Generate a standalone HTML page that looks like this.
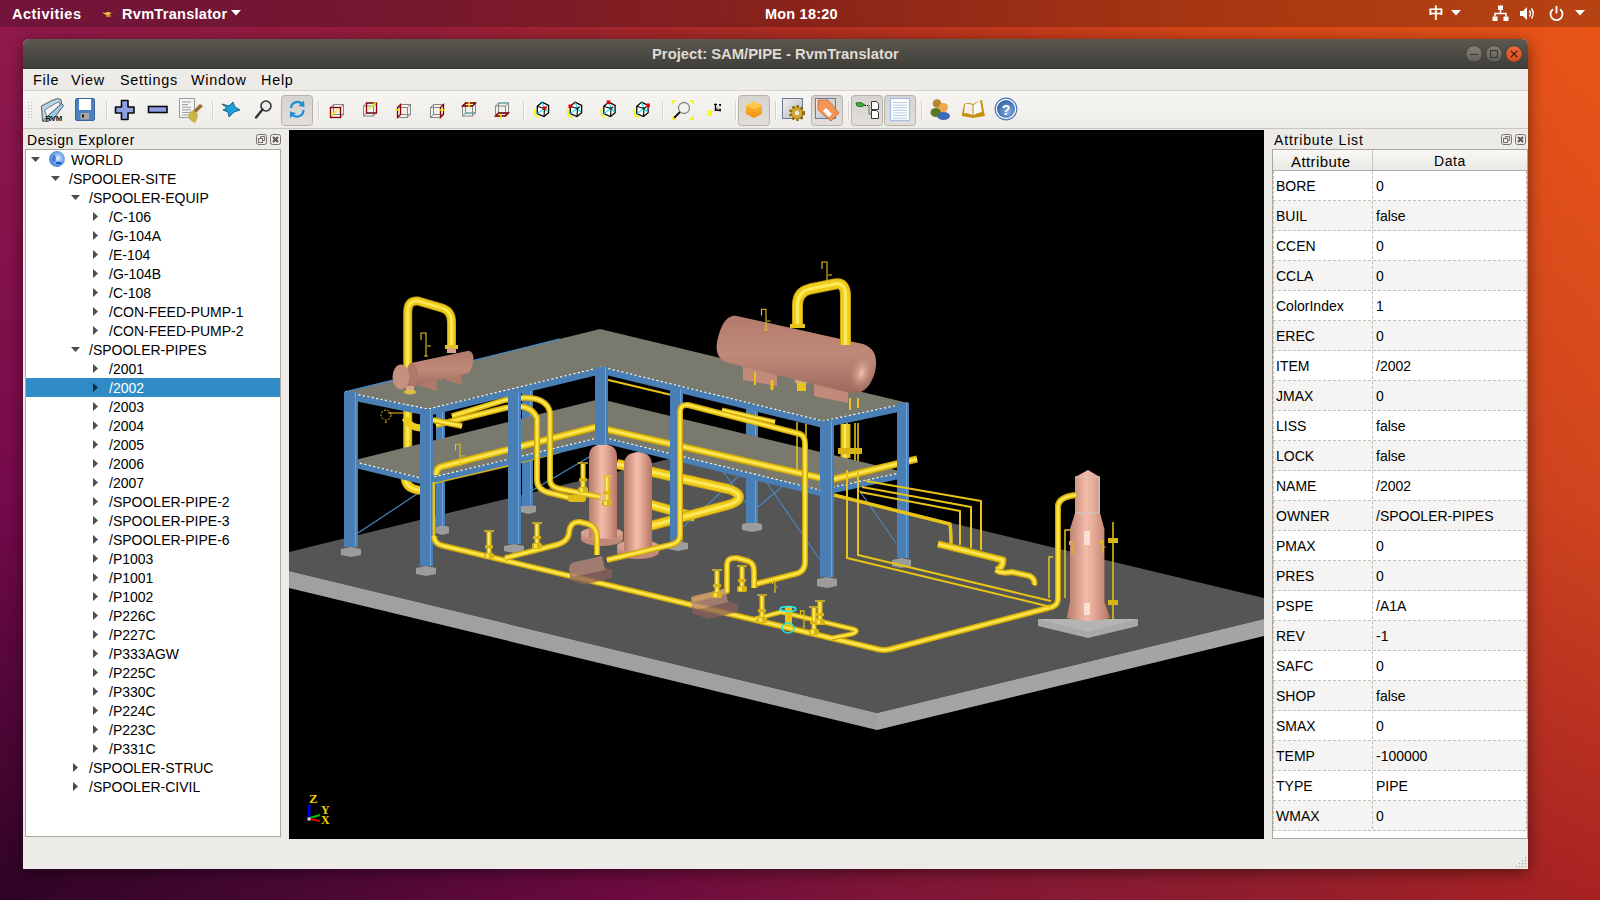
<!DOCTYPE html>
<html><head><meta charset="utf-8">
<style>
*{box-sizing:border-box;margin:0;padding:0}
html,body{width:1600px;height:900px;overflow:hidden}
body{position:relative;font-family:"Liberation Sans",sans-serif;font-size:14px;line-height:19px;color:#000;background:#8a1f40}
#wp{position:absolute;left:0;top:0;width:1600px;height:900px}
#topbar{position:absolute;left:0;top:0;width:1600px;height:27px;background:rgba(0,0,0,0.22);color:#fff;font-weight:bold;font-size:14.5px}
#topbar span{position:absolute;top:5px;white-space:nowrap}
#win{position:absolute;left:23px;top:39px;width:1505px;height:830px;background:#edebe7;border-radius:6px 6px 0 0;
 box-shadow:0 3px 16px rgba(0,0,0,0.5);overflow:hidden}
#title{position:absolute;left:0;top:0;width:1505px;height:30px;background:linear-gradient(#5b5850,#3f3e39);border-bottom:1px solid #34332f}
#title .t{position:absolute;left:629px;top:6px;color:#dfdbd2;font-weight:bold;font-size:14.8px;white-space:nowrap}
#menubar{position:absolute;left:0;top:30px;width:1505px;height:22px;background:#edebe7;border-bottom:1px solid #d6d2cd;border-top:1px solid #f8f7f4}
#menubar span{position:absolute;top:1px;font-size:14.4px;letter-spacing:0.75px}
#toolbar{position:absolute;left:0;top:52px;width:1505px;height:38px;background:linear-gradient(#f6f5f2,#eeece8);border-bottom:1px solid #c9c5bf}
.dtitle{position:absolute;font-size:14px;white-space:nowrap}
#tree{position:absolute;left:2px;top:110px;width:256px;height:688px;background:#fff;border:1px solid #aaa6a0;overflow:hidden}
.row{position:absolute;left:0;height:19px;width:254px;white-space:nowrap}
.row span{position:absolute;top:1px;font-size:14px;line-height:19px}
.row.sel{background:#308cc6;color:#fff}
.arr{position:absolute}
#view{position:absolute;left:266px;top:91px;width:975px;height:709px;background:#000;overflow:hidden}
#attr{position:absolute;left:1249px;top:110px;width:256px;height:690px;background:#fff;border:1px solid #aaa6a0;overflow:hidden}
#attr .hdr{position:absolute;left:0;top:0;width:254px;height:21px;background:linear-gradient(#f9f8f6,#ebe9e5);border-bottom:1px solid #b0aca6}
#attr .hdr span{position:absolute;top:2px;font-size:14px;white-space:nowrap}
.arow{position:absolute;left:0;width:254px;height:30px}
.arow .k,.arow .v{position:absolute;top:6px;font-size:14px;white-space:nowrap}
.arow .k{left:3px}.arow .v{left:103px}

</style></head><body>
<svg id="wp" width="1600" height="900" viewBox="0 0 1600 900">
 <defs>
  <linearGradient id="wpt" x1="0" y1="0" x2="1" y2="0">
   <stop offset="0" stop-color="#921a4c"/>
   <stop offset="0.25" stop-color="#961e3c"/>
   <stop offset="0.5" stop-color="#b02e22"/>
   <stop offset="0.75" stop-color="#d64618"/>
   <stop offset="1" stop-color="#ea5618"/>
  </linearGradient>
  <linearGradient id="wpmid" x1="0" y1="0" x2="1" y2="0">
   <stop offset="0" stop-color="#760a4c"/>
   <stop offset="0.25" stop-color="#7c0e44"/>
   <stop offset="0.5" stop-color="#982030"/>
   <stop offset="0.75" stop-color="#b83222"/>
   <stop offset="1" stop-color="#d0461e"/>
  </linearGradient>
  <linearGradient id="wpb" x1="0" y1="0" x2="1" y2="0">
   <stop offset="0" stop-color="#2e0424"/>
   <stop offset="0.19" stop-color="#480834"/>
   <stop offset="0.38" stop-color="#6a0a40"/>
   <stop offset="0.56" stop-color="#7e1638"/>
   <stop offset="0.75" stop-color="#8c1c30"/>
   <stop offset="1" stop-color="#a82222"/>
  </linearGradient>
  <linearGradient id="wpm1" x1="0" y1="0" x2="0" y2="1">
   <stop offset="0.03" stop-color="#fff" stop-opacity="0"/>
   <stop offset="0.555" stop-color="#fff" stop-opacity="1"/>
  </linearGradient>
  <linearGradient id="wpm2" x1="0" y1="0" x2="0" y2="1">
   <stop offset="0.555" stop-color="#fff" stop-opacity="0"/>
   <stop offset="1" stop-color="#fff" stop-opacity="1"/>
  </linearGradient>
  <mask id="wpmask1"><rect width="1600" height="900" fill="url(#wpm1)"/></mask>
  <mask id="wpmask2"><rect width="1600" height="900" fill="url(#wpm2)"/></mask>
 </defs>
 <rect width="1600" height="900" fill="url(#wpt)"/>
 <rect width="1600" height="900" fill="url(#wpmid)" mask="url(#wpmask1)"/>
 <rect width="1600" height="900" fill="url(#wpb)" mask="url(#wpmask2)"/>
</svg>
<div id="topbar">
 <span style="left:12px;letter-spacing:0.5px">Activities</span>
 <svg style="position:absolute;left:101px;top:8px" width="14" height="10"><path d="M1 4Q4 8 8 7L13 3L10 5Q7 3 4 5Z" fill="#f3c43a"/><path d="M5 8H10" stroke="#d9a52a" stroke-width="1.5"/></svg>
 <span style="left:122px;letter-spacing:0.3px">RvmTranslator</span>
 <svg style="position:absolute;left:231px;top:10px" width="10" height="6"><path d="M0 0H10L5 5.5Z" fill="#fff"/></svg>
 <span style="left:765px;letter-spacing:0.2px">Mon 18:20</span>
 <span style="left:1429px;top:3px;font-size:15px">中</span>
 <svg style="position:absolute;left:1451px;top:10px" width="10" height="6"><path d="M0 0H10L5 5.5Z" fill="#fff"/></svg>
 <svg style="position:absolute;left:1492px;top:5px" width="17" height="17"><rect x="6" y="0.5" width="5" height="4.5" fill="#fff"/><rect x="0.5" y="11.5" width="5" height="4.5" fill="#fff"/><rect x="11.5" y="11.5" width="5" height="4.5" fill="#fff"/><path d="M8.5 5V8.5M3 11.5V8.5H14V11.5" stroke="#fff" stroke-width="1.5" fill="none"/></svg>
 <svg style="position:absolute;left:1519px;top:5px" width="17" height="17"><path d="M1 6H4L8 2V15L4 11H1Z" fill="#fff"/><path d="M10.5 5.5Q12.5 8.5 10.5 11.5M12.5 3.5Q16 8.5 12.5 13.5" stroke="#fff" stroke-width="1.4" fill="none"/></svg>
 <svg style="position:absolute;left:1548px;top:5px" width="17" height="17"><path d="M5 4.2A6 6 0 1 0 12 4.2" stroke="#fff" stroke-width="1.8" fill="none"/><path d="M8.5 1V8.5" stroke="#fff" stroke-width="1.8"/></svg>
 <svg style="position:absolute;left:1575px;top:10px" width="10" height="6"><path d="M0 0H10L5 5.5Z" fill="#fff"/></svg>
</div>

<div id="win">
 <div id="title"><div class="t">Project: SAM/PIPE - RvmTranslator</div>
  <svg style="position:absolute;left:1440px;top:6px" width="60" height="20">
   <defs><linearGradient id="wbg" x1="0" y1="0" x2="0" y2="1"><stop offset="0" stop-color="#858279"/><stop offset="1" stop-color="#5f5d57"/></linearGradient>
   <linearGradient id="wbc" x1="0" y1="0" x2="0" y2="1"><stop offset="0" stop-color="#f0683a"/><stop offset="1" stop-color="#d84c1e"/></linearGradient></defs>
   <circle cx="11" cy="9" r="8.2" fill="url(#wbg)" stroke="#3d3c38" stroke-width="0.8"/>
   <path d="M7 9.5H15" stroke="#3a3935" stroke-width="1.2"/>
   <circle cx="31" cy="9" r="8.2" fill="url(#wbg)" stroke="#3d3c38" stroke-width="0.8"/>
   <rect x="27.5" y="5.5" width="7" height="7" fill="none" stroke="#3a3935" stroke-width="1.2"/>
   <circle cx="51" cy="9" r="8.2" fill="url(#wbc)" stroke="#3d3c38" stroke-width="0.8"/>
   <path d="M47.8 5.8L54.2 12.2M54.2 5.8L47.8 12.2" stroke="#2d1a10" stroke-width="1.1"/>
  </svg>
 </div>
 <div id="menubar">
  <span style="left:10px">File</span><span style="left:48px">View</span><span style="left:97px">Settings</span><span style="left:168px">Window</span><span style="left:238px">Help</span>
 </div>
 <div id="toolbar"><svg width="1505" height="38" viewBox="23 91 1505 38" style="position:absolute;left:0;top:0">
<defs>
<linearGradient id="fold" x1="0" y1="0" x2="0" y2="1"><stop offset="0" stop-color="#9ec4e0"/><stop offset="1" stop-color="#5a8ab0"/></linearGradient>
<linearGradient id="pbtn" x1="0" y1="0" x2="0" y2="1"><stop offset="0" stop-color="#d6d3ce"/><stop offset="1" stop-color="#e2dfda"/></linearGradient>
<radialGradient id="help" cx="0.6" cy="0.65" r="0.6"><stop offset="0" stop-color="#86aee0"/><stop offset="1" stop-color="#3a68a8"/></radialGradient>
<linearGradient id="cubeo" x1="0" y1="0" x2="0" y2="1"><stop offset="0" stop-color="#ffc040"/><stop offset="1" stop-color="#f09010"/></linearGradient>
<linearGradient id="gearbg" x1="0" y1="0" x2="1" y2="1"><stop offset="0" stop-color="#f0f0f0"/><stop offset="1" stop-color="#b8b8b8"/></linearGradient>
</defs>
<rect x="28.0" y="102" width="1" height="1" fill="#bdb9b3"/>
<rect x="28.0" y="105" width="1" height="1" fill="#bdb9b3"/>
<rect x="28.0" y="108" width="1" height="1" fill="#bdb9b3"/>
<rect x="28.0" y="111" width="1" height="1" fill="#bdb9b3"/>
<rect x="28.0" y="114" width="1" height="1" fill="#bdb9b3"/>
<rect x="28.0" y="117" width="1" height="1" fill="#bdb9b3"/>
<rect x="31.0" y="102" width="1" height="1" fill="#bdb9b3"/>
<rect x="31.0" y="105" width="1" height="1" fill="#bdb9b3"/>
<rect x="31.0" y="108" width="1" height="1" fill="#bdb9b3"/>
<rect x="31.0" y="111" width="1" height="1" fill="#bdb9b3"/>
<rect x="31.0" y="114" width="1" height="1" fill="#bdb9b3"/>
<rect x="31.0" y="117" width="1" height="1" fill="#bdb9b3"/>
<rect x="106" y="101" width="1" height="19" fill="#d6d2cc"/><rect x="107" y="101" width="1" height="19" fill="#fbfaf8"/>
<rect x="212" y="101" width="1" height="19" fill="#d6d2cc"/><rect x="213" y="101" width="1" height="19" fill="#fbfaf8"/>
<rect x="318" y="101" width="1" height="19" fill="#d6d2cc"/><rect x="319" y="101" width="1" height="19" fill="#fbfaf8"/>
<rect x="523" y="101" width="1" height="19" fill="#d6d2cc"/><rect x="524" y="101" width="1" height="19" fill="#fbfaf8"/>
<rect x="662" y="101" width="1" height="19" fill="#d6d2cc"/><rect x="663" y="101" width="1" height="19" fill="#fbfaf8"/>
<rect x="735" y="101" width="1" height="19" fill="#d6d2cc"/><rect x="736" y="101" width="1" height="19" fill="#fbfaf8"/>
<rect x="775" y="101" width="1" height="19" fill="#d6d2cc"/><rect x="776" y="101" width="1" height="19" fill="#fbfaf8"/>
<rect x="848" y="101" width="1" height="19" fill="#d6d2cc"/><rect x="849" y="101" width="1" height="19" fill="#fbfaf8"/>
<rect x="921" y="101" width="1" height="19" fill="#d6d2cc"/><rect x="922" y="101" width="1" height="19" fill="#fbfaf8"/>
<rect x="281.5" y="95.5" width="31" height="30" rx="3" fill="url(#pbtn)" stroke="#b7b3ac"/>
<rect x="738.5" y="95.5" width="31" height="30" rx="3" fill="url(#pbtn)" stroke="#b7b3ac"/>
<rect x="811.5" y="95.5" width="31" height="30" rx="3" fill="url(#pbtn)" stroke="#b7b3ac"/>
<rect x="851.5" y="95.5" width="31" height="30" rx="3" fill="url(#pbtn)" stroke="#b7b3ac"/>
<rect x="884.5" y="95.5" width="31" height="30" rx="3" fill="url(#pbtn)" stroke="#b7b3ac"/>
<path d="M41.5,106 L52,100.5 L57.5,98.5 L61,99.5 L61.5,103 L47,120.5 L42.5,121 Z" fill="#b4d4e8" stroke="#4a4a4a" stroke-width="0.9" stroke-linejoin="round"/>
<path d="M44.5,110 L59,101.5 L60.5,105 L47,117 Z" fill="#f2f2f4" stroke="#555" stroke-width="0.7"/>
<path d="M42.5,121 L61.5,103.5 L63.5,105.5 L55,117 L48,121.5 Z" fill="#9ccae8" stroke="#4a4a4a" stroke-width="0.9" stroke-linejoin="round"/>
<text x="45.5" y="121.3" font-family="Liberation Sans" font-weight="bold" font-size="7.8" fill="#111" letter-spacing="-0.2">RVM</text>
<rect x="75.5" y="98.5" width="19" height="22" rx="1.5" fill="#4f7fc0" stroke="#3a64a0"/>
<rect x="79" y="99" width="12" height="11" fill="#ffffff"/>
<rect x="80.5" y="113" width="8.5" height="6.5" fill="#a8a8a0"/><rect x="82" y="114.5" width="2" height="3" fill="#222"/>
<path d="M121.5,100.5 H128 V107 H134 V113 H128 V119.5 H121.5 V113 H115.5 V107 H121.5 Z" fill="#8ea0e4" stroke="#0a0a0a" stroke-width="1.6" stroke-linejoin="round"/>
<rect x="148.5" y="106.5" width="18.5" height="6" fill="#8ea0e4" stroke="#0a0a0a" stroke-width="1.6"/>
<rect x="179.5" y="98.5" width="15" height="19" fill="#f6f6f6" stroke="#9a9a9a"/>
<rect x="182" y="101.5" width="9" height="1" fill="#9a9a9a"/>
<rect x="182" y="104.1" width="6" height="1" fill="#9a9a9a"/>
<rect x="182" y="106.7" width="9" height="1" fill="#9a9a9a"/>
<rect x="182" y="109.3" width="9" height="1" fill="#9a9a9a"/>
<rect x="182" y="111.9" width="9" height="1" fill="#9a9a9a"/>
<rect x="182" y="114.5" width="9" height="1" fill="#9a9a9a"/>
<path d="M200,104 L203,106 L196,113 L193,111Z" fill="#9a6a30"/>
<path d="M193,110 L198,114 Q197,121 195,123 Q190,121 188,117 Q189,112 193,110Z" fill="#c8b448"/>
<path d="M222,104 L229,106 L233,102 L235,107 L240,110 L234,112 L229,117 L228,112 L223,110 L227,108 Z" fill="#1aa0dc" stroke="#0a4a70" stroke-width="0.8"/>
<circle cx="266" cy="106" r="5" fill="#e8eef0" stroke="#333" stroke-width="1.6"/>
<path d="M262.5,109.5 L256,117.5" stroke="#333" stroke-width="2.4" stroke-linecap="round"/>
<path d="M291,108 A6.5,6.5 0 0 1 303,105" stroke="#1a90d8" stroke-width="2.2" fill="none"/><path d="M304,100.5 L304.5,107 L298.5,106 Z" fill="#1a90d8"/>
<path d="M303.5,110 A6.5,6.5 0 0 1 291.5,113.5" stroke="#1a90d8" stroke-width="2.2" fill="none"/><path d="M290,118 L290,111.5 L296,113 Z" fill="#1a90d8"/>
<path d="M333.5,104.5 h10 v10 M333.5,104.5 v10 h10" stroke="#00e0f0" stroke-width="1" fill="none"/><rect x="333.5" y="104.5" width="10" height="10" fill="none" stroke="#888" stroke-width="1"/><path d="M330.5,107.5 L333.5,104.5 M340.5,107.5 L343.5,104.5 M340.5,117.5 L343.5,114.5 M330.5,117.5 L333.5,114.5" stroke="#888" stroke-width="1"/><rect x="330.5" y="107.5" width="10" height="10" fill="none" stroke="#888" stroke-width="1"/><rect x="330.5" y="107.5" width="10" height="10" fill="none" stroke="#8b0000" stroke-width="1.3"/>
<path d="M331,116 L337,110" stroke="#f0f000" stroke-width="1.5"/>
<path d="M366.5,103.0 h10 v10 M366.5,103.0 v10 h10" stroke="#00e0f0" stroke-width="1" fill="none"/><rect x="366.5" y="103.0" width="10" height="10" fill="none" stroke="#888" stroke-width="1"/><path d="M363.5,106.0 L366.5,103.0 M373.5,106.0 L376.5,103.0 M373.5,116.0 L376.5,113.0 M363.5,116.0 L366.5,113.0" stroke="#888" stroke-width="1"/><rect x="363.5" y="106.0" width="10" height="10" fill="none" stroke="#888" stroke-width="1"/><rect x="366.5" y="103.0" width="10" height="10" fill="none" stroke="#8b0000" stroke-width="1.3"/>
<path d="M376,102 L369,109" stroke="#f0f000" stroke-width="1.5"/>
<path d="M400.5,104.5 h10 v10 M400.5,104.5 v10 h10" stroke="#00e0f0" stroke-width="1" fill="none"/><rect x="400.5" y="104.5" width="10" height="10" fill="none" stroke="#888" stroke-width="1"/><path d="M397.5,107.5 L400.5,104.5 M407.5,107.5 L410.5,104.5 M407.5,117.5 L410.5,114.5 M397.5,117.5 L400.5,114.5" stroke="#888" stroke-width="1"/><rect x="397.5" y="107.5" width="10" height="10" fill="none" stroke="#888" stroke-width="1"/><path d="M397.5,107.5 L400.5,104.5 V114.5 L397.5,117.5Z" fill="none" stroke="#8b0000" stroke-width="1.3"/>
<path d="M395,110 L400,110" stroke="#f0f000" stroke-width="1.5"/>
<path d="M433.5,104.5 h10 v10 M433.5,104.5 v10 h10" stroke="#00e0f0" stroke-width="1" fill="none"/><rect x="433.5" y="104.5" width="10" height="10" fill="none" stroke="#888" stroke-width="1"/><path d="M430.5,107.5 L433.5,104.5 M440.5,107.5 L443.5,104.5 M440.5,117.5 L443.5,114.5 M430.5,117.5 L433.5,114.5" stroke="#888" stroke-width="1"/><rect x="430.5" y="107.5" width="10" height="10" fill="none" stroke="#888" stroke-width="1"/><path d="M440.5,107.5 L443.5,104.5 V114.5 L440.5,117.5Z" fill="none" stroke="#8b0000" stroke-width="1.3"/>
<path d="M445,110 L440,110" stroke="#f0f000" stroke-width="1.5"/>
<path d="M465.5,103.0 h10 v10 M465.5,103.0 v10 h10" stroke="#00e0f0" stroke-width="1" fill="none"/><rect x="465.5" y="103.0" width="10" height="10" fill="none" stroke="#888" stroke-width="1"/><path d="M462.5,106.0 L465.5,103.0 M472.5,106.0 L475.5,103.0 M472.5,116.0 L475.5,113.0 M462.5,116.0 L465.5,113.0" stroke="#888" stroke-width="1"/><rect x="462.5" y="106.0" width="10" height="10" fill="none" stroke="#888" stroke-width="1"/><path d="M462.5,106.0 L465.5,103.0 H475.5 L472.5,106.0Z" fill="none" stroke="#8b0000" stroke-width="1.3"/>
<path d="M469,102 L469,107" stroke="#f0f000" stroke-width="1.5"/>
<path d="M498.5,103.0 h10 v10 M498.5,103.0 v10 h10" stroke="#00e0f0" stroke-width="1" fill="none"/><rect x="498.5" y="103.0" width="10" height="10" fill="none" stroke="#888" stroke-width="1"/><path d="M495.5,106.0 L498.5,103.0 M505.5,106.0 L508.5,103.0 M505.5,116.0 L508.5,113.0 M495.5,116.0 L498.5,113.0" stroke="#888" stroke-width="1"/><rect x="495.5" y="106.0" width="10" height="10" fill="none" stroke="#888" stroke-width="1"/><path d="M495.5,116.0 L498.5,113.0 H508.5 L505.5,116.0Z" fill="none" stroke="#8b0000" stroke-width="1.3"/>
<path d="M501,119 L501,114" stroke="#f0f000" stroke-width="1.5"/>
<path d="M542.0,102.2 L548.6,105.3 L548.6,112.7 L544.0,116.6 L537.3,113.6 L537.3,106.3 Z" fill="#fff" stroke="#000" stroke-width="1.3"/><path d="M544.5,108.3 L542.0,102.2 M544.5,108.3 L537.3,113.6 M544.5,108.3 L548.0,112.0" stroke="#00e8f8" stroke-width="1.1"/><path d="M537.3,106.3 L541.0,107.5 L544.5,108.3 L546.8,106.8 M544.5,108.3 L544.0,116.6" stroke="#000" stroke-width="1.1" fill="none"/><rect x="542.7" y="106.5" width="3.6" height="3.6" fill="#f00000"/><path d="M534.5,110.0 V115.0 " stroke="none"/><path d="M534.5,109.5 L535.2,115.5 L539.5,117.5" stroke="#f8f800" stroke-width="1.6" fill="none"/><path d="M533.0,111.0 L534.5,108.5 L536.0,111.0Z" fill="#f8f800"/>
<path d="M575.0,102.2 L581.6,105.3 L581.6,112.7 L577.0,116.6 L570.3,113.6 L570.3,106.3 Z" fill="#fff" stroke="#000" stroke-width="1.3"/><path d="M577.5,108.3 L575.0,102.2 M577.5,108.3 L570.3,113.6 M577.5,108.3 L581.0,112.0" stroke="#00e8f8" stroke-width="1.1"/><path d="M570.3,106.3 L574.0,107.5 L577.5,108.3 L579.8,106.8 M577.5,108.3 L577.0,116.6" stroke="#000" stroke-width="1.1" fill="none"/><rect x="568.5" y="104.5" width="3.6" height="3.6" fill="#f00000"/><path d="M567.5,110.0 V115.0 " stroke="none"/><path d="M567.5,109.5 L568.2,115.5 L572.5,117.5" stroke="#f8f800" stroke-width="1.6" fill="none"/><path d="M566.0,111.0 L567.5,108.5 L569.0,111.0Z" fill="#f8f800"/>
<path d="M608.5,102.2 L615.1,105.3 L615.1,112.7 L610.5,116.6 L603.8,113.6 L603.8,106.3 Z" fill="#fff" stroke="#000" stroke-width="1.3"/><path d="M611.0,108.3 L608.5,102.2 M611.0,108.3 L603.8,113.6 M611.0,108.3 L614.5,112.0" stroke="#00e8f8" stroke-width="1.1"/><path d="M603.8,106.3 L607.5,107.5 L611.0,108.3 L613.3,106.8 M611.0,108.3 L610.5,116.6" stroke="#000" stroke-width="1.1" fill="none"/><rect x="606.7" y="100.4" width="3.6" height="3.6" fill="#f00000"/><path d="M601.0,110.0 V115.0 " stroke="none"/><path d="M601.0,109.5 L601.7,115.5 L606.0,117.5" stroke="#f8f800" stroke-width="1.6" fill="none"/><path d="M599.5,111.0 L601.0,108.5 L602.5,111.0Z" fill="#f8f800"/>
<path d="M641.5,102.2 L648.1,105.3 L648.1,112.7 L643.5,116.6 L636.8,113.6 L636.8,106.3 Z" fill="#fff" stroke="#000" stroke-width="1.3"/><path d="M644.0,108.3 L641.5,102.2 M644.0,108.3 L636.8,113.6 M644.0,108.3 L647.5,112.0" stroke="#00e8f8" stroke-width="1.1"/><path d="M636.8,106.3 L640.5,107.5 L644.0,108.3 L646.3,106.8 M644.0,108.3 L643.5,116.6" stroke="#000" stroke-width="1.1" fill="none"/><rect x="646.3" y="103.5" width="3.6" height="3.6" fill="#f00000"/><path d="M634.0,110.0 V115.0 " stroke="none"/><path d="M634.0,109.5 L634.7,115.5 L639.0,117.5" stroke="#f8f800" stroke-width="1.6" fill="none"/><path d="M632.5,111.0 L634.0,108.5 L635.5,111.0Z" fill="#f8f800"/>
<circle cx="684" cy="108" r="5.5" fill="none" stroke="#888" stroke-width="1.3"/><path d="M680,112 L674,118" stroke="#111" stroke-width="1.8"/>
<path d="M673,104 V101 H676 M690,101 H693 V104 M673,116 V119 H676 M693,116 V119 H690" stroke="#f0f000" stroke-width="1.5" fill="none"/>
<rect x="707.5" y="110" width="4.5" height="6" rx="1.5" fill="#f8f800"/><rect x="709.3" y="111.3" width="1" height="3.5" fill="#f3f1ed"/>
<path d="M715.5,103.5 V110.2 H721" stroke="#000" stroke-width="1.4" fill="none"/><path d="M714,104.5 H717 M720,108.5 V111.5" stroke="#000" stroke-width="1.2"/><path d="M716.5,109 L720.5,104.5" stroke="#000" stroke-width="1" stroke-dasharray="1 1"/><path d="M718.5,104 H721 V106.5Z" fill="#000"/>
<path d="M754,101.5 L762,105.5 V114 L754,118 L746,114 V105.5 Z" fill="url(#cubeo)"/><path d="M746,105.5 L754,109.5 L762,105.5 L754,101.5Z" fill="#ffc848"/>
<rect x="782.5" y="98.5" width="20" height="20" fill="url(#gearbg)" stroke="#6a7a98"/>
<circle cx="797" cy="113" r="6.5" fill="#c8981e" stroke="#8a6a10" stroke-width="3" stroke-dasharray="2.2 2"/>
<circle cx="797" cy="113" r="5.2" fill="#d4a830"/><circle cx="797" cy="113" r="2.2" fill="#e8e8e8"/>
<rect x="815.5" y="98.5" width="20" height="20" fill="url(#gearbg)" stroke="#6a7a98"/>
<path d="M818,100 L828,100 L839,113 L831,121 L818,110 Z" fill="#f4965a" stroke="#c86020" stroke-width="0.8"/>
<path d="M826,108 L832,114 L829,117 L823,111Z" fill="#fff"/>
<path d="M856,103 Q861,101 865,105 Q862,108 857,106 Z" fill="#40b030" stroke="#106010" stroke-width="0.8"/>
<path d="M865,105.5 H869 V114 H871" stroke="#000" stroke-width="1" stroke-dasharray="1 1" fill="none"/>
<path d="M871.5,101.5 h5 l2,2 v6 h-7z M871.5,110.5 h5 l2,2 v6 h-7z" fill="#fff" stroke="#222" stroke-width="0.9"/>
<rect x="890.5" y="98.5" width="19" height="22" fill="#fdfdfd" stroke="#9cc0e8" stroke-width="1.2"/>
<rect x="893" y="102.0" width="14" height="1" fill="#b8cce4"/>
<rect x="893" y="104.6" width="14" height="1" fill="#b8cce4"/>
<rect x="893" y="107.2" width="14" height="1" fill="#b8cce4"/>
<rect x="893" y="109.8" width="14" height="1" fill="#b8cce4"/>
<rect x="893" y="112.4" width="14" height="1" fill="#b8cce4"/>
<rect x="893" y="115.0" width="14" height="1" fill="#b8cce4"/>
<rect x="893" y="117.6" width="14" height="1" fill="#b8cce4"/>
<ellipse cx="936" cy="112.5" rx="5.5" ry="4.5" fill="#5a7a1a"/><circle cx="937" cy="103.5" r="4.3" fill="#b8842c"/>
<ellipse cx="943.5" cy="116" rx="6.5" ry="4" fill="#3a6ab8"/><circle cx="943.5" cy="107.5" r="4.5" fill="#f0a848"/>
<path d="M962,114 L964,104 Q968,102 973,104 Q978,101 982,100 L984,112 L985,116 L973,118 L962,116 Z" fill="#c8900c"/>
<path d="M964,113 L965,104 Q969,103 972.5,105 V115 Q968,113 964,113Z" fill="#f0f0f0"/><path d="M973.5,105 Q977,102 980,100.5 L982,112 Q977,113 973.5,115Z" fill="#fafafa"/>
<circle cx="1006" cy="109" r="10.8" fill="#fff" stroke="#4a78b8" stroke-width="1.2"/><circle cx="1006" cy="109" r="9" fill="url(#help)"/>
<text x="1006" y="114.5" text-anchor="middle" font-family="Liberation Sans" font-weight="bold" font-size="14" fill="#fff">?</text>
</svg></div>
 <div class="dtitle" style="left:4px;top:92px;letter-spacing:0.55px">Design Explorer</div>
 <svg style="position:absolute;left:233px;top:95px" width="26" height="12">
  <rect x="0.5" y="0.5" width="10" height="10" rx="2" fill="none" stroke="#77736d"/>
  <rect x="2.5" y="4.5" width="4" height="4" fill="none" stroke="#77736d"/><path d="M4.5 4.5V2.5H8.5V6.5H6.5" fill="none" stroke="#77736d"/>
  <rect x="14.5" y="0.5" width="10" height="10" rx="2" fill="none" stroke="#77736d"/>
  <path d="M17 3L22 8M22 3L17 8" stroke="#5a5650" stroke-width="2"/>
 </svg>
 <div id="tree"><div class="row" style="top:0px"><svg class="arr" style="left:5px;top:7px" width="9" height="5"><path d="M0 0H9L4.5 5Z" fill="#4c4c4c"/></svg><svg class="arr" style="left:23px;top:1px" width="16" height="16"><defs><radialGradient id="gl" cx="0.55" cy="0.45" r="0.6"><stop offset="0" stop-color="#f4f8ff"/><stop offset="0.3" stop-color="#a8c8f8"/><stop offset="0.75" stop-color="#5a94e4"/><stop offset="1" stop-color="#2c6ad0"/></radialGradient></defs><circle cx="8" cy="8" r="7.9" fill="url(#gl)"/><ellipse cx="5" cy="7.5" rx="1.8" ry="3.6" fill="#2a64c4" opacity="0.75"/><ellipse cx="9.5" cy="12" rx="3" ry="1.3" fill="#1a5ac0"/></svg><span style="left:45px">WORLD</span></div>
<div class="row" style="top:19px"><svg class="arr" style="left:25px;top:7px" width="9" height="5"><path d="M0 0H9L4.5 5Z" fill="#4c4c4c"/></svg><span style="left:43px">/SPOOLER-SITE</span></div>
<div class="row" style="top:38px"><svg class="arr" style="left:45px;top:7px" width="9" height="5"><path d="M0 0H9L4.5 5Z" fill="#4c4c4c"/></svg><span style="left:63px">/SPOOLER-EQUIP</span></div>
<div class="row" style="top:57px"><svg class="arr" style="left:67px;top:5px" width="5" height="9"><path d="M0 0V9L5 4.5Z" fill="#4c4c4c"/></svg><span style="left:83px">/C-106</span></div>
<div class="row" style="top:76px"><svg class="arr" style="left:67px;top:5px" width="5" height="9"><path d="M0 0V9L5 4.5Z" fill="#4c4c4c"/></svg><span style="left:83px">/G-104A</span></div>
<div class="row" style="top:95px"><svg class="arr" style="left:67px;top:5px" width="5" height="9"><path d="M0 0V9L5 4.5Z" fill="#4c4c4c"/></svg><span style="left:83px">/E-104</span></div>
<div class="row" style="top:114px"><svg class="arr" style="left:67px;top:5px" width="5" height="9"><path d="M0 0V9L5 4.5Z" fill="#4c4c4c"/></svg><span style="left:83px">/G-104B</span></div>
<div class="row" style="top:133px"><svg class="arr" style="left:67px;top:5px" width="5" height="9"><path d="M0 0V9L5 4.5Z" fill="#4c4c4c"/></svg><span style="left:83px">/C-108</span></div>
<div class="row" style="top:152px"><svg class="arr" style="left:67px;top:5px" width="5" height="9"><path d="M0 0V9L5 4.5Z" fill="#4c4c4c"/></svg><span style="left:83px">/CON-FEED-PUMP-1</span></div>
<div class="row" style="top:171px"><svg class="arr" style="left:67px;top:5px" width="5" height="9"><path d="M0 0V9L5 4.5Z" fill="#4c4c4c"/></svg><span style="left:83px">/CON-FEED-PUMP-2</span></div>
<div class="row" style="top:190px"><svg class="arr" style="left:45px;top:7px" width="9" height="5"><path d="M0 0H9L4.5 5Z" fill="#4c4c4c"/></svg><span style="left:63px">/SPOOLER-PIPES</span></div>
<div class="row" style="top:209px"><svg class="arr" style="left:67px;top:5px" width="5" height="9"><path d="M0 0V9L5 4.5Z" fill="#4c4c4c"/></svg><span style="left:83px">/2001</span></div>
<div class="row sel" style="top:228px"><svg class="arr" style="left:67px;top:5px" width="5" height="9"><path d="M0 0V9L5 4.5Z" fill="#1a2a38"/></svg><span style="left:83px">/2002</span></div>
<div class="row" style="top:247px"><svg class="arr" style="left:67px;top:5px" width="5" height="9"><path d="M0 0V9L5 4.5Z" fill="#4c4c4c"/></svg><span style="left:83px">/2003</span></div>
<div class="row" style="top:266px"><svg class="arr" style="left:67px;top:5px" width="5" height="9"><path d="M0 0V9L5 4.5Z" fill="#4c4c4c"/></svg><span style="left:83px">/2004</span></div>
<div class="row" style="top:285px"><svg class="arr" style="left:67px;top:5px" width="5" height="9"><path d="M0 0V9L5 4.5Z" fill="#4c4c4c"/></svg><span style="left:83px">/2005</span></div>
<div class="row" style="top:304px"><svg class="arr" style="left:67px;top:5px" width="5" height="9"><path d="M0 0V9L5 4.5Z" fill="#4c4c4c"/></svg><span style="left:83px">/2006</span></div>
<div class="row" style="top:323px"><svg class="arr" style="left:67px;top:5px" width="5" height="9"><path d="M0 0V9L5 4.5Z" fill="#4c4c4c"/></svg><span style="left:83px">/2007</span></div>
<div class="row" style="top:342px"><svg class="arr" style="left:67px;top:5px" width="5" height="9"><path d="M0 0V9L5 4.5Z" fill="#4c4c4c"/></svg><span style="left:83px">/SPOOLER-PIPE-2</span></div>
<div class="row" style="top:361px"><svg class="arr" style="left:67px;top:5px" width="5" height="9"><path d="M0 0V9L5 4.5Z" fill="#4c4c4c"/></svg><span style="left:83px">/SPOOLER-PIPE-3</span></div>
<div class="row" style="top:380px"><svg class="arr" style="left:67px;top:5px" width="5" height="9"><path d="M0 0V9L5 4.5Z" fill="#4c4c4c"/></svg><span style="left:83px">/SPOOLER-PIPE-6</span></div>
<div class="row" style="top:399px"><svg class="arr" style="left:67px;top:5px" width="5" height="9"><path d="M0 0V9L5 4.5Z" fill="#4c4c4c"/></svg><span style="left:83px">/P1003</span></div>
<div class="row" style="top:418px"><svg class="arr" style="left:67px;top:5px" width="5" height="9"><path d="M0 0V9L5 4.5Z" fill="#4c4c4c"/></svg><span style="left:83px">/P1001</span></div>
<div class="row" style="top:437px"><svg class="arr" style="left:67px;top:5px" width="5" height="9"><path d="M0 0V9L5 4.5Z" fill="#4c4c4c"/></svg><span style="left:83px">/P1002</span></div>
<div class="row" style="top:456px"><svg class="arr" style="left:67px;top:5px" width="5" height="9"><path d="M0 0V9L5 4.5Z" fill="#4c4c4c"/></svg><span style="left:83px">/P226C</span></div>
<div class="row" style="top:475px"><svg class="arr" style="left:67px;top:5px" width="5" height="9"><path d="M0 0V9L5 4.5Z" fill="#4c4c4c"/></svg><span style="left:83px">/P227C</span></div>
<div class="row" style="top:494px"><svg class="arr" style="left:67px;top:5px" width="5" height="9"><path d="M0 0V9L5 4.5Z" fill="#4c4c4c"/></svg><span style="left:83px">/P333AGW</span></div>
<div class="row" style="top:513px"><svg class="arr" style="left:67px;top:5px" width="5" height="9"><path d="M0 0V9L5 4.5Z" fill="#4c4c4c"/></svg><span style="left:83px">/P225C</span></div>
<div class="row" style="top:532px"><svg class="arr" style="left:67px;top:5px" width="5" height="9"><path d="M0 0V9L5 4.5Z" fill="#4c4c4c"/></svg><span style="left:83px">/P330C</span></div>
<div class="row" style="top:551px"><svg class="arr" style="left:67px;top:5px" width="5" height="9"><path d="M0 0V9L5 4.5Z" fill="#4c4c4c"/></svg><span style="left:83px">/P224C</span></div>
<div class="row" style="top:570px"><svg class="arr" style="left:67px;top:5px" width="5" height="9"><path d="M0 0V9L5 4.5Z" fill="#4c4c4c"/></svg><span style="left:83px">/P223C</span></div>
<div class="row" style="top:589px"><svg class="arr" style="left:67px;top:5px" width="5" height="9"><path d="M0 0V9L5 4.5Z" fill="#4c4c4c"/></svg><span style="left:83px">/P331C</span></div>
<div class="row" style="top:608px"><svg class="arr" style="left:47px;top:5px" width="5" height="9"><path d="M0 0V9L5 4.5Z" fill="#4c4c4c"/></svg><span style="left:63px">/SPOOLER-STRUC</span></div>
<div class="row" style="top:627px"><svg class="arr" style="left:47px;top:5px" width="5" height="9"><path d="M0 0V9L5 4.5Z" fill="#4c4c4c"/></svg><span style="left:63px">/SPOOLER-CIVIL</span></div></div>
 <div id="view"><svg width="975" height="709" viewBox="289 130 975 709" style="position:absolute;left:0;top:0">
<defs>
 <linearGradient id="pinkv" x1="0" y1="0" x2="1" y2="0"><stop offset="0" stop-color="#b97a6a"/><stop offset="0.45" stop-color="#f2bca8"/><stop offset="0.6" stop-color="#e8ae9a"/><stop offset="1" stop-color="#b47464"/></linearGradient>
 <linearGradient id="pinkh" x1="0" y1="0" x2="0" y2="1"><stop offset="0" stop-color="#b27a6a"/><stop offset="0.5" stop-color="#c08a7a"/><stop offset="1" stop-color="#9c6a5c"/></linearGradient>
 <radialGradient id="drumend" cx="0.5" cy="0.55" r="0.5"><stop offset="0" stop-color="#f4c4b0"/><stop offset="1" stop-color="#b07868" stop-opacity="0"/></radialGradient>
</defs>
<polygon points="289,552 677,457 1264,598 1264,619 877,713 289,571" fill="#555555"/>
<polygon points="289,571 877,713 877,730 289,588" fill="#a0a0a0"/>
<polygon points="877,713 1264,619 1264,636 877,730" fill="#a4a4a4"/>
<polygon points="1038,619 1138,619 1138,626 1088,638 1038,626" fill="#a9a9a9"/>
<polygon points="1038,619 1138,619 1088,632" fill="#b4b4b4"/>
<path d="M341,549 L351.0,547 L361,549 V555 L351.0,557 L341,555Z" fill="#9c9c9c"/>
<path d="M416,568 L426.0,566 L436,568 V574 L426.0,576 L416,574Z" fill="#9c9c9c"/>
<path d="M436,527 L442.5,525 L449,527 V533 L442.5,535 L436,533Z" fill="#9c9c9c"/>
<path d="M504,546 L514.0,544 L524,546 V551 L514.0,553 L504,551Z" fill="#9c9c9c"/>
<path d="M521,506 L528.5,504 L536,506 V512 L528.5,514 L521,512Z" fill="#9c9c9c"/>
<path d="M668,543 L678.0,541 L688,543 V549 L678.0,551 L668,549Z" fill="#9c9c9c"/>
<path d="M742,524 L752.0,522 L762,524 V530 L752.0,532 L742,530Z" fill="#9c9c9c"/>
<path d="M817,579 L827.0,577 L837,579 V586 L827.0,588 L817,586Z" fill="#9c9c9c"/>
<path d="M892,560 L901.5,558 L911,560 V566 L901.5,568 L892,566Z" fill="#9c9c9c"/>
<g stroke="#4a86c0" stroke-width="1.2" fill="none">
<line x1="358" y1="533" x2="420" y2="492"/>
<line x1="533" y1="490" x2="596" y2="453"/>
<line x1="683" y1="527" x2="741" y2="474"/>
<line x1="721" y1="469" x2="746" y2="503"/>
<line x1="758" y1="507" x2="784" y2="485"/>
<line x1="765" y1="480" x2="820" y2="560"/>
<line x1="859" y1="490" x2="896" y2="543"/>
</g>
<rect x="436" y="412" width="9" height="114" fill="#4a7fb5"/>
<rect x="442" y="412" width="1" height="114" fill="#6aa4dc"/>
<rect x="522" y="390" width="11" height="116" fill="#4a7fb5"/>
<rect x="530" y="390" width="1" height="116" fill="#6aa4dc"/>
<rect x="746" y="405" width="12" height="118" fill="#4a7fb5"/>
<rect x="755" y="405" width="1" height="118" fill="#6aa4dc"/>
<path d="M645,503 L695,517" stroke="#c9a40c" stroke-width="10" fill="none" stroke-linejoin="round" stroke-linecap="butt"/>
<path d="M645,503 L695,517" stroke="#efcb1a" stroke-width="8" fill="none" stroke-linejoin="round"/>
<path d="M645,503 L695,517" stroke="#ffe95a" stroke-width="3.0" fill="none" stroke-linejoin="round"/>
<path d="M617,464 L728,489 Q742,493 738,500 Q735,503 728,505 L650,526" stroke="#c9a40c" stroke-width="10" fill="none" stroke-linejoin="round" stroke-linecap="butt"/>
<path d="M617,464 L728,489 Q742,493 738,500 Q735,503 728,505 L650,526" stroke="#efcb1a" stroke-width="8" fill="none" stroke-linejoin="round"/>
<path d="M617,464 L728,489 Q742,493 738,500 Q735,503 728,505 L650,526" stroke="#ffe95a" stroke-width="3.0" fill="none" stroke-linejoin="round"/>
<path d="M407.7,364 V452" stroke="#c9a40c" stroke-width="9" fill="none" stroke-linejoin="round" stroke-linecap="butt"/>
<path d="M407.7,364 V452" stroke="#efcb1a" stroke-width="7" fill="none" stroke-linejoin="round"/>
<path d="M407.7,364 V452" stroke="#ffe95a" stroke-width="2.6999999999999997" fill="none" stroke-linejoin="round"/>
<path d="M405,476 Q405,488 418,490 L426,491" stroke="#c9a40c" stroke-width="9" fill="none" stroke-linejoin="round" stroke-linecap="butt"/>
<path d="M405,476 Q405,488 418,490 L426,491" stroke="#efcb1a" stroke-width="7" fill="none" stroke-linejoin="round"/>
<path d="M405,476 Q405,488 418,490 L426,491" stroke="#ffe95a" stroke-width="2.6999999999999997" fill="none" stroke-linejoin="round"/>
<path d="M845.5,424 V458" stroke="#c9a40c" stroke-width="10" fill="none" stroke-linejoin="round" stroke-linecap="butt"/>
<path d="M845.5,424 V458" stroke="#efcb1a" stroke-width="8" fill="none" stroke-linejoin="round"/>
<path d="M845.5,424 V458" stroke="#ffe95a" stroke-width="3.0" fill="none" stroke-linejoin="round"/>
<path d="M847,423 V472" stroke="#e8c418" stroke-width="1.6" fill="none" stroke-linejoin="round"/>
<path d="M855,423 V472" stroke="#e8c418" stroke-width="1.6" fill="none" stroke-linejoin="round"/>
<path d="M858,423 V472" stroke="#e8c418" stroke-width="1.6" fill="none" stroke-linejoin="round"/>
<rect x="838" y="448" width="24" height="6" fill="#d8b414"/>
<polygon points="351,461 600,399 904,472 820,490 602,437 425,479" fill="#79796d"/>
<path d="M436,475 Q436,467 444,466 L596,427 L830,480 L917,459" stroke="#c9a40c" stroke-width="7" fill="none" stroke-linejoin="round" stroke-linecap="butt"/>
<path d="M436,475 Q436,467 444,466 L596,427 L830,480 L917,459" stroke="#efcb1a" stroke-width="5" fill="none" stroke-linejoin="round"/>
<path d="M436,475 Q436,467 444,466 L596,427 L830,480 L917,459" stroke="#ffe95a" stroke-width="2.1" fill="none" stroke-linejoin="round"/>
<path d="M434,481 L507,464 L560,450" stroke="#c9a40c" stroke-width="6" fill="none" stroke-linejoin="round" stroke-linecap="butt"/>
<path d="M434,481 L507,464 L560,450" stroke="#efcb1a" stroke-width="4" fill="none" stroke-linejoin="round"/>
<path d="M434,481 L507,464 L560,450" stroke="#ffe95a" stroke-width="1.7999999999999998" fill="none" stroke-linejoin="round"/>
<g fill="#4a7fb5">
 <polygon points="351,461 425,479 425,485 351,467"/>
 <polygon points="425,479 602,437 602,443 425,485"/>
 <polygon points="602,437 820,490 820,496 602,443"/>
 <polygon points="820,490 904,472 904,478 820,496"/>
</g>
<g stroke="#f0f0e0" stroke-width="1.2" stroke-dasharray="2.5 2" fill="none"><polyline points="351,461 425,479 602,437 820,490 904,472"/></g>
<path d="M455.5,450.6 V444.3 H460 V465 M461,456.0 H464.5 M458.2,465 H461.8" stroke="#e8c418" stroke-width="1.1" fill="none"/>
<ellipse cx="602" cy="539" rx="21" ry="7" fill="#c08878"/><rect x="581" y="533" width="42" height="6" fill="#c89080"/><ellipse cx="602" cy="533" rx="21" ry="6" fill="#d8a090"/>
<path d="M589,538 V456 Q589,445 603,444 Q617,445 617,456 V538Z" fill="url(#pinkv)"/>
<ellipse cx="638" cy="552" rx="21" ry="7" fill="#c08878"/><rect x="617" y="546" width="42" height="6" fill="#c89080"/><ellipse cx="638" cy="546" rx="21" ry="6" fill="#d8a090"/>
<path d="M624,551 V465 Q624,453 638,452 Q652,453 652,465 V551Z" fill="url(#pinkv)"/>
<polygon points="345,392 600,329 908,403 823,421 602,367 428,409" fill="#79796d"/>
<polyline points="345,392 560,339" stroke="#4a86c0" stroke-width="1.3" fill="none"/>
<g fill="#4a7fb5">
 <polygon points="345,392 428,409 428,416 345,399"/>
 <polygon points="428,409 602,367 602,374 428,416"/>
 <polygon points="602,367 823,421 823,428 602,374"/>
 <polygon points="823,421 908,403 908,410 823,428"/>
</g>
<g stroke="#f0f0e0" stroke-width="1.2" stroke-dasharray="2.5 2" fill="none"><polyline points="345,392 428,409 602,367 823,421 908,403"/></g>
<path d="M436,425 L505,408 Q530,402 537,418 V480 Q537,490 550,493 L575,499" stroke="#c9a40c" stroke-width="6" fill="none" stroke-linejoin="round" stroke-linecap="butt"/>
<path d="M436,425 L505,408 Q530,402 537,418 V480 Q537,490 550,493 L575,499" stroke="#efcb1a" stroke-width="4" fill="none" stroke-linejoin="round"/>
<path d="M436,425 L505,408 Q530,402 537,418 V480 Q537,490 550,493 L575,499" stroke="#ffe95a" stroke-width="1.7999999999999998" fill="none" stroke-linejoin="round"/>
<path d="M452,416 L505,400 Q545,392 550,412 V480 Q550,487 560,489 L600,497" stroke="#c9a40c" stroke-width="6" fill="none" stroke-linejoin="round" stroke-linecap="butt"/>
<path d="M452,416 L505,400 Q545,392 550,412 V480 Q550,487 560,489 L600,497" stroke="#efcb1a" stroke-width="4" fill="none" stroke-linejoin="round"/>
<path d="M452,416 L505,400 Q545,392 550,412 V480 Q550,487 560,489 L600,497" stroke="#ffe95a" stroke-width="1.7999999999999998" fill="none" stroke-linejoin="round"/>
<path d="M433,420 L462,426" stroke="#c9a40c" stroke-width="6" fill="none" stroke-linejoin="round" stroke-linecap="butt"/>
<path d="M433,420 L462,426" stroke="#efcb1a" stroke-width="4" fill="none" stroke-linejoin="round"/>
<path d="M433,420 L462,426" stroke="#ffe95a" stroke-width="1.7999999999999998" fill="none" stroke-linejoin="round"/>
<path d="M600,378 L680,397" stroke="#e8c418" stroke-width="2" fill="none" stroke-linejoin="round"/>
<path d="M722,410 L775,422" stroke="#c9a40c" stroke-width="5" fill="none" stroke-linejoin="round" stroke-linecap="butt"/>
<path d="M722,410 L775,422" stroke="#efcb1a" stroke-width="3" fill="none" stroke-linejoin="round"/>
<path d="M722,410 L775,422" stroke="#ffe95a" stroke-width="1.5" fill="none" stroke-linejoin="round"/>
<path d="M797,422 V470" stroke="#e8c418" stroke-width="1.5" fill="none" stroke-linejoin="round"/>
<path d="M806,424 V470" stroke="#e8c418" stroke-width="1.5" fill="none" stroke-linejoin="round"/>
<path d="M405,418 Q410,428 422,428" stroke="#efcb1a" stroke-width="7" fill="none"/>
<circle cx="386" cy="415" r="5" fill="none" stroke="#e8c418" stroke-width="1" stroke-dasharray="2 1.5"/><path d="M388,413 H404 M386,421 V423" stroke="#e8c418" stroke-width="1"/>
<rect x="580.5" y="464" width="5" height="26" fill="#e6c21a"/>
<rect x="582" y="464" width="1.5" height="26" fill="#fff070"/>
<path d="M578,463 H588" stroke="#e8c820" stroke-width="1.4"/>
<rect x="579" y="478.3" width="8" height="3" fill="#d8b414"/>
<rect x="578" y="487" width="10" height="6" rx="2" fill="#d8b414"/>
<rect x="580" y="488" width="3" height="4" fill="#f8e050"/>
<rect x="604.5" y="477" width="5" height="26" fill="#e6c21a"/>
<rect x="606" y="477" width="1.5" height="26" fill="#fff070"/>
<path d="M602,476 H612" stroke="#e8c820" stroke-width="1.4"/>
<rect x="603" y="491.3" width="8" height="3" fill="#d8b414"/>
<rect x="602" y="500" width="10" height="6" rx="2" fill="#d8b414"/>
<rect x="604" y="501" width="3" height="4" fill="#f8e050"/>
<rect x="568" y="495" width="18" height="7" rx="3" fill="#e0bc18"/>
<rect x="344" y="392" width="14" height="155" fill="#4a7fb5"/>
<rect x="355" y="392" width="1" height="155" fill="#6aa4dc"/>
<rect x="420" y="409" width="13" height="157" fill="#4a7fb5"/>
<rect x="430" y="409" width="1" height="157" fill="#6aa4dc"/>
<rect x="508" y="393" width="13" height="151" fill="#4a7fb5"/>
<rect x="518" y="393" width="1" height="151" fill="#6aa4dc"/>
<rect x="595" y="367" width="13" height="78" fill="#4a7fb5"/>
<rect x="605" y="367" width="1" height="78" fill="#6aa4dc"/>
<rect x="670" y="389" width="13" height="152" fill="#4a7fb5"/>
<rect x="680" y="389" width="1" height="152" fill="#6aa4dc"/>
<rect x="820" y="421" width="14" height="156" fill="#4a7fb5"/>
<rect x="831" y="421" width="1" height="156" fill="#6aa4dc"/>
<rect x="897" y="403" width="12" height="155" fill="#4a7fb5"/>
<rect x="906" y="403" width="1" height="155" fill="#6aa4dc"/>
<path d="M680,540 V412 Q680,404 688,405 L800,434 Q805,436 805,444 V562 Q805,572 795,574 L752,585" stroke="#c9a40c" stroke-width="6" fill="none" stroke-linejoin="round" stroke-linecap="butt"/>
<path d="M680,540 V412 Q680,404 688,405 L800,434 Q805,436 805,444 V562 Q805,572 795,574 L752,585" stroke="#efcb1a" stroke-width="4" fill="none" stroke-linejoin="round"/>
<path d="M680,540 V412 Q680,404 688,405 L800,434 Q805,436 805,444 V562 Q805,572 795,574 L752,585" stroke="#ffe95a" stroke-width="1.7999999999999998" fill="none" stroke-linejoin="round"/>
<path d="M680,535 Q680,543 670,545 L607,560" stroke="#c9a40c" stroke-width="6" fill="none" stroke-linejoin="round" stroke-linecap="butt"/>
<path d="M680,535 Q680,543 670,545 L607,560" stroke="#efcb1a" stroke-width="4" fill="none" stroke-linejoin="round"/>
<path d="M680,535 Q680,543 670,545 L607,560" stroke="#ffe95a" stroke-width="1.7999999999999998" fill="none" stroke-linejoin="round"/>
<path d="M434,482 V538" stroke="#e8c418" stroke-width="3" fill="none" stroke-linejoin="round"/>
<path d="M434,536 Q434,544 444,546 L877,649 Q884,651 891,649 L1052,607 Q1058,605 1058,598 V507 Q1058,497 1076,495" stroke="#c9a40c" stroke-width="6" fill="none" stroke-linejoin="round" stroke-linecap="butt"/>
<path d="M434,536 Q434,544 444,546 L877,649 Q884,651 891,649 L1052,607 Q1058,605 1058,598 V507 Q1058,497 1076,495" stroke="#efcb1a" stroke-width="4" fill="none" stroke-linejoin="round"/>
<path d="M434,536 Q434,544 444,546 L877,649 Q884,651 891,649 L1052,607 Q1058,605 1058,598 V507 Q1058,497 1076,495" stroke="#ffe95a" stroke-width="1.7999999999999998" fill="none" stroke-linejoin="round"/>
<path d="M505,558 L556,545 Q568,542 569,533 Q570,521 580,522 L588,524 Q597,527 597,537 V555" stroke="#c9a40c" stroke-width="6" fill="none" stroke-linejoin="round" stroke-linecap="butt"/>
<path d="M505,558 L556,545 Q568,542 569,533 Q570,521 580,522 L588,524 Q597,527 597,537 V555" stroke="#efcb1a" stroke-width="4" fill="none" stroke-linejoin="round"/>
<path d="M505,558 L556,545 Q568,542 569,533 Q570,521 580,522 L588,524 Q597,527 597,537 V555" stroke="#ffe95a" stroke-width="1.7999999999999998" fill="none" stroke-linejoin="round"/>
<path d="M692,600 L727,591 V565 Q727,557 737,558 L748,561 Q754,563 754,571 V588" stroke="#c9a40c" stroke-width="6" fill="none" stroke-linejoin="round" stroke-linecap="butt"/>
<path d="M692,600 L727,591 V565 Q727,557 737,558 L748,561 Q754,563 754,571 V588" stroke="#efcb1a" stroke-width="4" fill="none" stroke-linejoin="round"/>
<path d="M692,600 L727,591 V565 Q727,557 737,558 L748,561 Q754,563 754,571 V588" stroke="#ffe95a" stroke-width="1.7999999999999998" fill="none" stroke-linejoin="round"/>
<path d="M755,619 L781,612 L853,629 Q860,631 852,634 L832,638" stroke="#c9a40c" stroke-width="5" fill="none" stroke-linejoin="round" stroke-linecap="butt"/>
<path d="M755,619 L781,612 L853,629 Q860,631 852,634 L832,638" stroke="#efcb1a" stroke-width="3" fill="none" stroke-linejoin="round"/>
<path d="M755,619 L781,612 L853,629 Q860,631 852,634 L832,638" stroke="#ffe95a" stroke-width="1.5" fill="none" stroke-linejoin="round"/>
<g opacity="0.75"><polygon points="570,572 598,565 612,570 612,578 584,585 570,580" fill="#8a6058"/>
<ellipse cx="575" cy="569" rx="6" ry="7" fill="#b8887a"/><path d="M575,562 L602,556 L605,570 L578,576Z" fill="#b8887a"/></g>
<g opacity="0.75"><polygon points="692,606 720,599 738,604 738,612 708,619 692,613" fill="#8a6058"/>
<ellipse cx="697" cy="602" rx="6" ry="7" fill="#b8887a"/><path d="M697,595 L725,589 L728,602 L700,609Z" fill="#b8887a"/></g>
<rect x="486.5" y="532" width="5" height="24" fill="#e6c21a"/>
<rect x="488" y="532" width="1.5" height="24" fill="#fff070"/>
<path d="M484,531 H494" stroke="#e8c820" stroke-width="1.4"/>
<rect x="485" y="545.2" width="8" height="3" fill="#d8b414"/>
<rect x="484" y="553" width="10" height="6" rx="2" fill="#d8b414"/>
<rect x="486" y="554" width="3" height="4" fill="#f8e050"/>
<rect x="534.5" y="524" width="5" height="22" fill="#e6c21a"/>
<rect x="536" y="524" width="1.5" height="22" fill="#fff070"/>
<path d="M532,523 H542" stroke="#e8c820" stroke-width="1.4"/>
<rect x="533" y="536.1" width="8" height="3" fill="#d8b414"/>
<rect x="532" y="543" width="10" height="6" rx="2" fill="#d8b414"/>
<rect x="534" y="544" width="3" height="4" fill="#f8e050"/>
<rect x="714.5" y="571" width="5" height="24" fill="#e6c21a"/>
<rect x="716" y="571" width="1.5" height="24" fill="#fff070"/>
<path d="M712,570 H722" stroke="#e8c820" stroke-width="1.4"/>
<rect x="713" y="584.2" width="8" height="3" fill="#d8b414"/>
<rect x="712" y="592" width="10" height="6" rx="2" fill="#d8b414"/>
<rect x="714" y="593" width="3" height="4" fill="#f8e050"/>
<rect x="739.5" y="567" width="5" height="22" fill="#e6c21a"/>
<rect x="741" y="567" width="1.5" height="22" fill="#fff070"/>
<path d="M737,566 H747" stroke="#e8c820" stroke-width="1.4"/>
<rect x="738" y="579.1" width="8" height="3" fill="#d8b414"/>
<rect x="737" y="586" width="10" height="6" rx="2" fill="#d8b414"/>
<rect x="739" y="587" width="3" height="4" fill="#f8e050"/>
<rect x="759.5" y="596" width="5" height="24" fill="#e6c21a"/>
<rect x="761" y="596" width="1.5" height="24" fill="#fff070"/>
<path d="M757,595 H767" stroke="#e8c820" stroke-width="1.4"/>
<rect x="758" y="609.2" width="8" height="3" fill="#d8b414"/>
<rect x="757" y="617" width="10" height="6" rx="2" fill="#d8b414"/>
<rect x="759" y="618" width="3" height="4" fill="#f8e050"/>
<rect x="811.5" y="608" width="5" height="24" fill="#e6c21a"/>
<rect x="813" y="608" width="1.5" height="24" fill="#fff070"/>
<path d="M809,607 H819" stroke="#e8c820" stroke-width="1.4"/>
<rect x="810" y="621.2" width="8" height="3" fill="#d8b414"/>
<rect x="809" y="629" width="10" height="6" rx="2" fill="#d8b414"/>
<rect x="811" y="630" width="3" height="4" fill="#f8e050"/>
<rect x="817.5" y="602" width="5" height="20" fill="#e6c21a"/>
<rect x="819" y="602" width="1.5" height="20" fill="#fff070"/>
<path d="M815,601 H825" stroke="#e8c820" stroke-width="1.4"/>
<rect x="816" y="613.0" width="8" height="3" fill="#d8b414"/>
<rect x="815" y="619" width="10" height="6" rx="2" fill="#d8b414"/>
<rect x="817" y="620" width="3" height="4" fill="#f8e050"/>
<rect x="785" y="607" width="7" height="20" fill="#e6c21a"/><ellipse cx="788" cy="609" rx="8" ry="2.5" fill="none" stroke="#20f0f0" stroke-width="1.5"/><ellipse cx="788" cy="628" rx="6" ry="5" fill="none" stroke="#20e0e0" stroke-width="1.4"/>
<path d="M800.5,615.8 V610.9 H804 V627 M805,620.0 H807.5 M802.6,627 H805.4" stroke="#e8c418" stroke-width="1.1" fill="none"/>
<path d="M772.5,584.0 V580.5 H775 V592 M776,587.0 H777.5 M774.0,592 H776.0" stroke="#e8c418" stroke-width="1.1" fill="none"/>
<polygon points="743,364 777,372 777,386 743,380" fill="#c28a7a"/>
<polygon points="814,381 848,390 848,403 814,396" fill="#c28a7a"/>
<path d="M772,380 V390" stroke="#e8c418" stroke-width="3" fill="none" stroke-linejoin="round"/>
<rect x="797" y="381" width="9" height="10" fill="#e8c420"/><rect x="795" y="380" width="13" height="3" fill="#d8a090"/>
<path d="M755,372 V385" stroke="#e8c418" stroke-width="2" fill="none" stroke-linejoin="round"/>
<path d="M850,398 V410" stroke="#e8c418" stroke-width="2" fill="none" stroke-linejoin="round"/>
<path d="M858,398 V408" stroke="#e8c418" stroke-width="2" fill="none" stroke-linejoin="round"/>
<path d="M737,316 L863,344 Q880,350 875,372 Q868,396 850,393 L725,362 Q712,355 719,334 Q725,314 737,316Z" fill="url(#pinkh)"/>
<ellipse cx="862" cy="371" rx="13" ry="21" transform="rotate(13 862 371)" fill="url(#drumend)"/>
<path d="M761.5,315.6 V309.3 H766 V330 M767,321.0 H770.5 M764.2,330 H767.8" stroke="#e8c418" stroke-width="1.1" fill="none"/>
<path d="M822.0,269.0 V262.0 H827 V285 M828,275.0 H832.0 M825.0,285 H829.0" stroke="#e8c418" stroke-width="1.1" fill="none"/>
<path d="M797.5,326 V305 Q797.5,292 810,289 L835,284 Q845.5,282 845.5,296 V345" stroke="#c9a40c" stroke-width="11" fill="none" stroke-linejoin="round" stroke-linecap="butt"/>
<path d="M797.5,326 V305 Q797.5,292 810,289 L835,284 Q845.5,282 845.5,296 V345" stroke="#efcb1a" stroke-width="9" fill="none" stroke-linejoin="round"/>
<path d="M797.5,326 V305 Q797.5,292 810,289 L835,284 Q845.5,282 845.5,296 V345" stroke="#ffe95a" stroke-width="3.3" fill="none" stroke-linejoin="round"/>
<rect x="790" y="324" width="15" height="4" fill="#e8c420"/>
<path d="M407.7,364 V312 Q407.7,300 418,301 L442,308 Q451.5,311 451.5,322 V346" stroke="#c9a40c" stroke-width="9" fill="none" stroke-linejoin="round" stroke-linecap="butt"/>
<path d="M407.7,364 V312 Q407.7,300 418,301 L442,308 Q451.5,311 451.5,322 V346" stroke="#efcb1a" stroke-width="7" fill="none" stroke-linejoin="round"/>
<path d="M407.7,364 V312 Q407.7,300 418,301 L442,308 Q451.5,311 451.5,322 V346" stroke="#ffe95a" stroke-width="2.6999999999999997" fill="none" stroke-linejoin="round"/>
<rect x="445" y="345" width="13" height="4" fill="#e8c420"/><rect x="447" y="348" width="9" height="5" fill="#d8a090"/>
<polygon points="418,376 436,372 437,391 420,386" fill="#b07a6a"/>
<polygon points="444,369 460,365 462,385 446,380" fill="#b07a6a"/>
<path d="M410,363.3 L468.7,350.7 Q475,352 473,362 Q471,372 468,373.3 L404.7,388 Z" fill="url(#pinkh)"/>
<ellipse cx="412" cy="375" rx="6" ry="12" fill="#b07868"/>
<ellipse cx="401" cy="377" rx="8.5" ry="12.5" fill="#c49080"/>
<rect x="406" y="386" width="8" height="5" fill="#d8a090"/><ellipse cx="410" cy="392" rx="6" ry="2.5" fill="#e0c040"/>
<path d="M421.0,340.0 V333.0 H426 V356 M427,346.0 H431.0 M424.0,356 H428.0" stroke="#e8c418" stroke-width="1.1" fill="none"/>
<path d="M1066.7,618 L1070,602 V529 L1075,513 V477 L1088,470 L1100,477 V513 L1104.4,529 V602 L1110,618 Q1088,624 1066.7,618Z" fill="url(#pinkv)"/>
<path d="M1075,477 H1100 M1075,513 H1100" stroke="#c8c8d0" stroke-width="1"/><path d="M1099,478 V512" stroke="#d0d0d8" stroke-width="1"/>
<rect x="1084" y="531" width="6" height="14" fill="#fff0e8" opacity="0.7"/><rect x="1084" y="603" width="6" height="12" fill="#fff0e8" opacity="0.7"/>
<path d="M1058,598 V507 Q1058,497 1076,495" stroke="#c9a40c" stroke-width="6" fill="none" stroke-linejoin="round" stroke-linecap="butt"/>
<path d="M1058,598 V507 Q1058,497 1076,495" stroke="#efcb1a" stroke-width="4" fill="none" stroke-linejoin="round"/>
<path d="M1058,598 V507 Q1058,497 1076,495" stroke="#ffe95a" stroke-width="1.7999999999999998" fill="none" stroke-linejoin="round"/>
<path d="M1049,598 V557 H1053" stroke="#e8c418" stroke-width="1.5" fill="none" stroke-linejoin="round"/>
<path d="M1065,598 V530 H1070" stroke="#e8c418" stroke-width="1.5" fill="none" stroke-linejoin="round"/>
<path d="M1113,620 V522" stroke="#e8c418" stroke-width="1.5" fill="none" stroke-linejoin="round"/>
<rect x="1108" y="538" width="10" height="5" fill="#d8b414"/><rect x="1108" y="600" width="10" height="5" fill="#d8b414"/>
<path d="M866,481 L981,501 V550" stroke="#e8c418" stroke-width="2" fill="none" stroke-linejoin="round"/>
<path d="M862,487 L971,507 V548" stroke="#e8c418" stroke-width="2" fill="none" stroke-linejoin="round"/>
<path d="M860,492 L960,511 V545" stroke="#e8c418" stroke-width="2" fill="none" stroke-linejoin="round"/>
<path d="M834,495 L950,524 Q951,530 951,545" stroke="#e8c418" stroke-width="3.5" fill="none" stroke-linejoin="round"/>
<path d="M847,470 V558 L1051,607" stroke="#e8c418" stroke-width="2" fill="none" stroke-linejoin="round"/>
<path d="M858,470 V555 L1051,601" stroke="#e8c418" stroke-width="2" fill="none" stroke-linejoin="round"/>
<path d="M938,544 L1003,560 Q1003,568 996,570" stroke="#c9a40c" stroke-width="7" fill="none" stroke-linejoin="round" stroke-linecap="butt"/>
<path d="M938,544 L1003,560 Q1003,568 996,570" stroke="#efcb1a" stroke-width="5" fill="none" stroke-linejoin="round"/>
<path d="M938,544 L1003,560 Q1003,568 996,570" stroke="#ffe95a" stroke-width="2.1" fill="none" stroke-linejoin="round"/>
<path d="M996,570 Q1000,574 1012,572 L1030,576 Q1036,580 1034,585" stroke="#c9a40c" stroke-width="6" fill="none" stroke-linejoin="round" stroke-linecap="butt"/>
<path d="M996,570 Q1000,574 1012,572 L1030,576 Q1036,580 1034,585" stroke="#efcb1a" stroke-width="4" fill="none" stroke-linejoin="round"/>
<path d="M996,570 Q1000,574 1012,572 L1030,576 Q1036,580 1034,585" stroke="#ffe95a" stroke-width="1.7999999999999998" fill="none" stroke-linejoin="round"/>
<path d="M1069.5,545.0 V541.5 H1072 V553 M1073,548.0 H1074.5 M1071.0,553 H1073.0" stroke="#e8c418" stroke-width="1.1" fill="none"/>
<path d="M1100.5,544.0 V540.5 H1103 V552 M1104,547.0 H1105.5 M1102.0,552 H1104.0" stroke="#e8c418" stroke-width="1.1" fill="none"/>
<rect x="308" y="805" width="2.5" height="14" fill="#0000f0"/>
<path d="M310,818 L320,815" stroke="#00c000" stroke-width="2"/><path d="M310,819 L320,821" stroke="#e00000" stroke-width="2"/>
<rect x="307.5" y="817.5" width="3" height="3" fill="#ddd"/>
<text x="309" y="802.5" font-family="Liberation Serif" font-weight="bold" font-size="13" fill="#f0d000">Z</text>
<text x="321" y="814" font-family="Liberation Serif" font-weight="bold" font-size="12" fill="#f0d000">Y</text>
<text x="321" y="823.5" font-family="Liberation Serif" font-weight="bold" font-size="12" fill="#f0d000">X</text>
</svg></div>
 <div class="dtitle" style="left:1251px;top:92px;letter-spacing:0.85px">Attribute List</div>
 <svg style="position:absolute;left:1478px;top:95px" width="26" height="12">
  <rect x="0.5" y="0.5" width="10" height="10" rx="2" fill="none" stroke="#77736d"/>
  <rect x="2.5" y="4.5" width="4" height="4" fill="none" stroke="#77736d"/><path d="M4.5 4.5V2.5H8.5V6.5H6.5" fill="none" stroke="#77736d"/>
  <rect x="14.5" y="0.5" width="10" height="10" rx="2" fill="none" stroke="#77736d"/>
  <path d="M17 3L22 8M22 3L17 8" stroke="#5a5650" stroke-width="2"/>
 </svg>
<svg style="position:absolute;left:0;top:0" width="1505" height="830"><rect x="1502" y="818" width="1.2" height="1.2" fill="#a9a59f"/><rect x="1502" y="821" width="1.2" height="1.2" fill="#a9a59f"/><rect x="1499" y="821" width="1.2" height="1.2" fill="#a9a59f"/><rect x="1502" y="824" width="1.2" height="1.2" fill="#a9a59f"/><rect x="1499" y="824" width="1.2" height="1.2" fill="#a9a59f"/><rect x="1496" y="824" width="1.2" height="1.2" fill="#a9a59f"/><rect x="1502" y="827" width="1.2" height="1.2" fill="#a9a59f"/><rect x="1499" y="827" width="1.2" height="1.2" fill="#a9a59f"/><rect x="1496" y="827" width="1.2" height="1.2" fill="#a9a59f"/><rect x="1493" y="827" width="1.2" height="1.2" fill="#a9a59f"/></svg>
 <div id="attr"><div class="hdr"><span style="left:18px;font-size:15px;letter-spacing:0.4px">Attribute</span><span style="left:99px;top:0;width:1px;height:20px;background:#c8c4be"></span><span style="left:161px;letter-spacing:0.6px">Data</span></div>
 <div class="arow" style="top:21px;background:#ffffff"><span class="k">BORE</span><span class="v">0</span></div>
<div class="arow" style="top:51px;background:#f5f4f2"><span class="k">BUIL</span><span class="v">false</span></div>
<div class="arow" style="top:81px;background:#ffffff"><span class="k">CCEN</span><span class="v">0</span></div>
<div class="arow" style="top:111px;background:#f5f4f2"><span class="k">CCLA</span><span class="v">0</span></div>
<div class="arow" style="top:141px;background:#ffffff"><span class="k">ColorIndex</span><span class="v">1</span></div>
<div class="arow" style="top:171px;background:#f5f4f2"><span class="k">EREC</span><span class="v">0</span></div>
<div class="arow" style="top:201px;background:#ffffff"><span class="k">ITEM</span><span class="v">/2002</span></div>
<div class="arow" style="top:231px;background:#f5f4f2"><span class="k">JMAX</span><span class="v">0</span></div>
<div class="arow" style="top:261px;background:#ffffff"><span class="k">LISS</span><span class="v">false</span></div>
<div class="arow" style="top:291px;background:#f5f4f2"><span class="k">LOCK</span><span class="v">false</span></div>
<div class="arow" style="top:321px;background:#ffffff"><span class="k">NAME</span><span class="v">/2002</span></div>
<div class="arow" style="top:351px;background:#f5f4f2"><span class="k">OWNER</span><span class="v">/SPOOLER-PIPES</span></div>
<div class="arow" style="top:381px;background:#ffffff"><span class="k">PMAX</span><span class="v">0</span></div>
<div class="arow" style="top:411px;background:#f5f4f2"><span class="k">PRES</span><span class="v">0</span></div>
<div class="arow" style="top:441px;background:#ffffff"><span class="k">PSPE</span><span class="v">/A1A</span></div>
<div class="arow" style="top:471px;background:#f5f4f2"><span class="k">REV</span><span class="v">-1</span></div>
<div class="arow" style="top:501px;background:#ffffff"><span class="k">SAFC</span><span class="v">0</span></div>
<div class="arow" style="top:531px;background:#f5f4f2"><span class="k">SHOP</span><span class="v">false</span></div>
<div class="arow" style="top:561px;background:#ffffff"><span class="k">SMAX</span><span class="v">0</span></div>
<div class="arow" style="top:591px;background:#f5f4f2"><span class="k">TEMP</span><span class="v">-100000</span></div>
<div class="arow" style="top:621px;background:#ffffff"><span class="k">TYPE</span><span class="v">PIPE</span></div>
<div class="arow" style="top:651px;background:#f5f4f2"><span class="k">WMAX</span><span class="v">0</span></div>
 <svg style="position:absolute;left:0;top:0" width="254" height="688">
  <g stroke="#c4c1bc" stroke-width="1" stroke-dasharray="3 2" fill="none">
   <path d="M0.5 21V680M99.5 21V680M253.5 21V680"/>
   <path d="M0 50.5H254"/><path d="M0 80.5H254"/><path d="M0 110.5H254"/><path d="M0 140.5H254"/><path d="M0 170.5H254"/><path d="M0 200.5H254"/><path d="M0 230.5H254"/><path d="M0 260.5H254"/><path d="M0 290.5H254"/><path d="M0 320.5H254"/><path d="M0 350.5H254"/><path d="M0 380.5H254"/><path d="M0 410.5H254"/><path d="M0 440.5H254"/><path d="M0 470.5H254"/><path d="M0 500.5H254"/><path d="M0 530.5H254"/><path d="M0 560.5H254"/><path d="M0 590.5H254"/><path d="M0 620.5H254"/><path d="M0 650.5H254"/><path d="M0 680.5H254"/>
  </g>
 </svg>
 </div>
</div>
</body></html>
